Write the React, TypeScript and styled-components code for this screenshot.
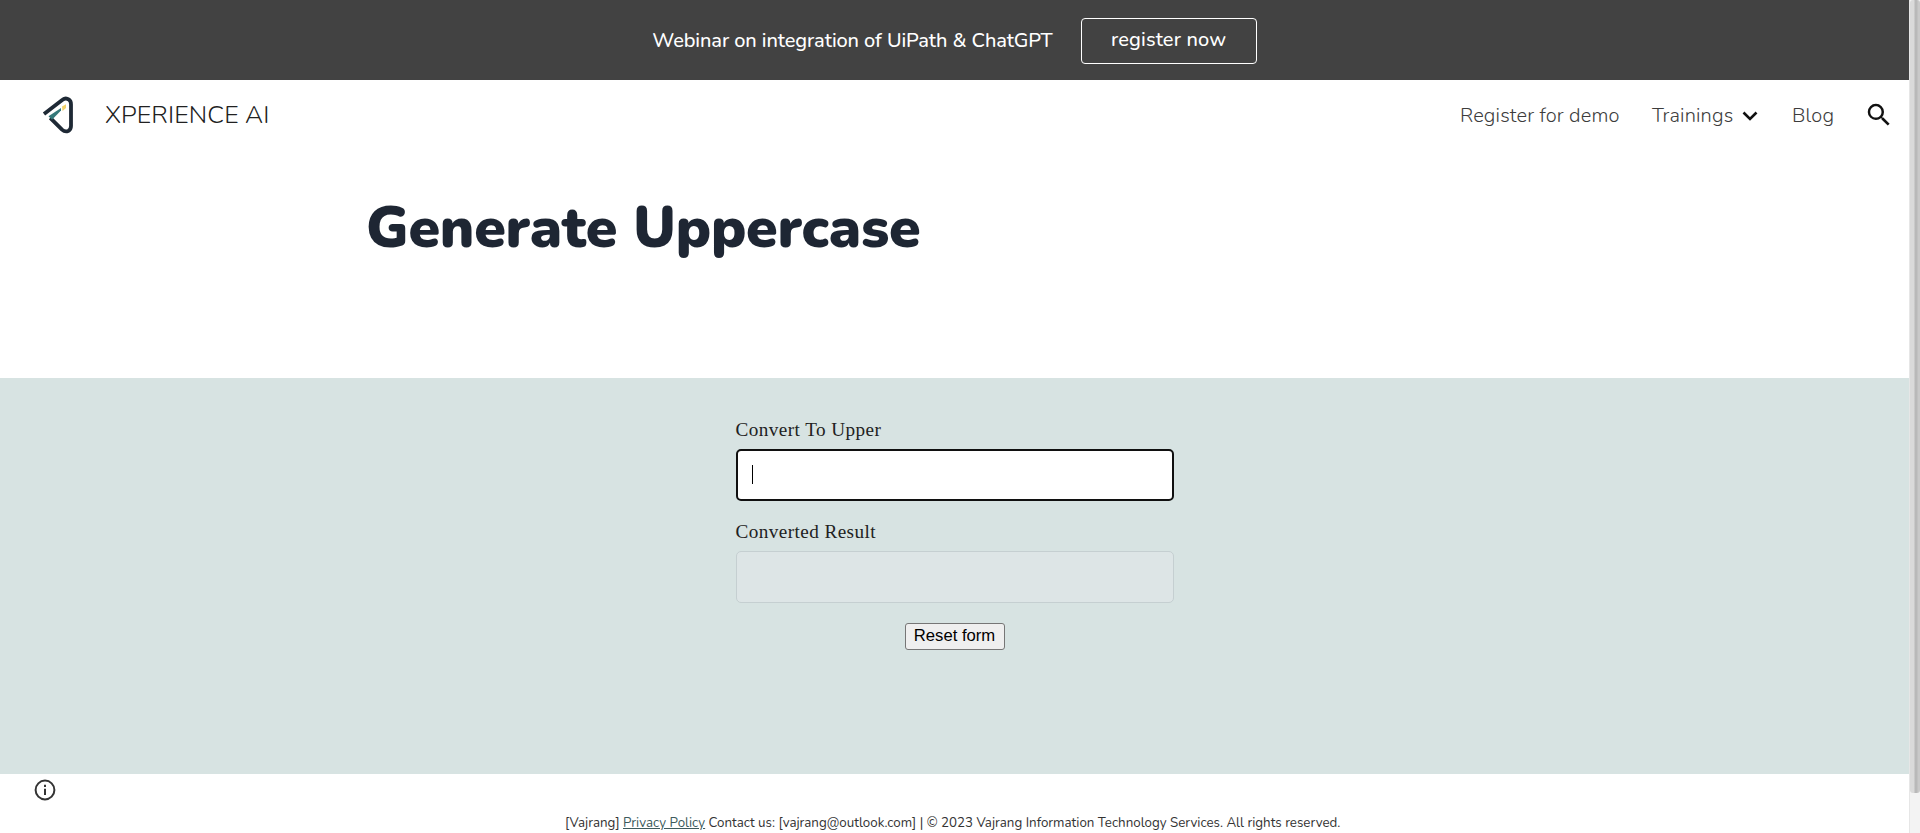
import React from "react";
import styled, { createGlobalStyle } from "styled-components";

const GlobalStyle = createGlobalStyle`
  * { box-sizing: border-box; }
  body {
    margin: 0;
    background: #fff;
    color: #212121;
    font-family: Nunito, "Noto Sans", sans-serif;
    overflow: hidden;
  }
`;

const Window = styled.div`
  display: flex;
  height: 833px;
`;

const Page = styled.div`
  flex: 1;
  min-width: 0;
  display: flex;
  flex-direction: column;
`;

const Announcement = styled.div`
  height: 80px;
  padding-top: 1px;
  display: flex;
  align-items: center;
  justify-content: center;
  gap: 28px;
  background: #424242;
  color: #fff;
`;

const Text = styled.span<{ $size: number; $weight?: number; $spacing?: number }>`
  font-size: ${(p) => p.$size}px;
  font-weight: ${(p) => p.$weight ?? 400};
  letter-spacing: ${(p) => p.$spacing ?? 0}px;
  line-height: 1.4;
  white-space: nowrap;
`;

const RegisterButton = styled.button`
  width: 176px;
  height: 46px;
  padding: 0 0 1px;
  border: 1px solid #fff;
  border-radius: 4px;
  background: transparent;
  color: #fff;
  font-family: inherit;
`;

const Header = styled.header`
  height: 70px;
  display: flex;
  align-items: center;
  padding: 0 15px 0 41px;
`;

const Brand = styled.div`
  display: flex;
  align-items: center;
  gap: 30px;
  margin-right: auto;
`;

const Nav = styled.nav`
  display: flex;
  align-items: center;
  color: #3c3c3c;
`;

const NavItem = styled.a<{ $width: number; $after: number }>`
  display: flex;
  width: ${(p) => p.$width}px;
  margin-right: ${(p) => p.$after}px;
  padding-top: 2px;
`;

const Hero = styled.section`
  height: 228px;
  padding: 37px 0 0 366px;
`;

const Title = styled.h1`
  margin: 0;
  color: #1e2633;
  font-size: 57px;
  font-weight: 900;
  line-height: 82px;
  letter-spacing: -0.2px;
  white-space: nowrap;
`;

const FormSection = styled.section`
  height: 396px;
  padding-top: 37px;
  display: flex;
  justify-content: center;
  background: #d7e3e2;
`;

const Form = styled.form`
  width: 438px;
  display: flex;
  flex-direction: column;
  align-items: stretch;
`;

const Label = styled.label`
  height: 34px;
  padding-top: 3px;
  font-family: "Liberation Serif", serif;
  font-size: 19.2px;
  line-height: 24px;
  letter-spacing: 0.42px;
`;

const Field = styled.div<{ $active?: boolean }>`
  height: 52px;
  margin-bottom: ${(p) => (p.$active ? 16 : 20)}px;
  padding: 0 14px;
  display: flex;
  align-items: center;
  border: ${(p) => (p.$active ? "2px solid #101010" : "1px solid #c5cfd1")};
  border-radius: 5px;
  background: ${(p) => (p.$active ? "#fff" : "#dde5e6")};
`;

const Caret = styled.span`
  width: 1px;
  height: 19px;
  margin-bottom: 2px;
  background: #000;
`;

const ResetButton = styled.button`
  align-self: center;
  width: 100px;
  height: 27px;
  padding: 0 0 1px;
  border: 1px solid #767676;
  border-radius: 3px;
  background: #efefef;
  color: #000;
  font-family: "Liberation Sans", sans-serif;
  font-size: 16.67px;
  white-space: nowrap;
`;

const Footer = styled.footer`
  flex: 1;
  padding: 5px 0 0 34px;
  display: flex;
  align-items: flex-start;
`;

const Legal = styled.p`
  margin: 34px 0 0 509px;
  color: #333;
  font-size: 13.33px;
  line-height: 20px;
  white-space: nowrap;

  a { color: #3d5a5c; }
`;

const ScrollTrack = styled.div`
  width: 11px;
  background: #f3f3f3;
  border-left: 1px solid #e6e6e6;
`;

const ScrollThumb = styled.div`
  height: 793px;
  background: linear-gradient(90deg, #dadada 0 4px, #b9b9b9 5px 7px, #c9c9c9 8px);
  border-radius: 3px;
`;

const Logo = () => (
  <svg width="34" height="40" viewBox="0 0 34 40" fill="none">
    <path d="M3 19 21.5 4.8Q24.6 2.2 28 4.6 30 6 30 9.5V31Q30 34.5 27.2 36 24 37.3 21 34.6L9.2 22.8" stroke="#1e2935" strokeWidth="3.8" />
    <path d="M7.5 21.2 20 13V15.5L11 24.8Z" fill="#347879" />
    <path d="M21 11.5 25 9.2V13L21.5 16Z" fill="#f2d36b" />
  </svg>
);

export default function App() {
  return (
    <>
      <GlobalStyle />
      <Window>
        <Page>
          <Announcement>
            <Text $size={20} $weight={500} $spacing={-0.1}>Webinar on integration of UiPath &amp; ChatGPT</Text>
            <RegisterButton><Text $size={20} $weight={500} $spacing={0.15}>register now</Text></RegisterButton>
          </Announcement>
          <Header>
            <Brand>
              <Logo />
              <Text $size={25} $weight={300} $spacing={0.12}>XPERIENCE AI</Text>
            </Brand>
            <Nav>
              <NavItem $width={160} $after={32}><Text $size={20} $weight={300} $spacing={0.16}>Register for demo</Text></NavItem>
              <NavItem $width={83} $after={7}><Text $size={20} $weight={300} $spacing={0.16}>Trainings</Text></NavItem>
              <NavItem $width={16} $after={34}>
                <svg width="16" height="10" viewBox="0 0 16 10" fill="none" stroke="#111" strokeWidth="2.6"><path d="m1.5 1.5 6.5 6.5 6.5-6.5" /></svg>
              </NavItem>
              <NavItem $width={42} $after={30}><Text $size={20} $weight={300} $spacing={0.16}>Blog</Text></NavItem>
              <svg width="30" height="30" viewBox="0 0 24 24" fill="#111"><path d="M15.5 14h-.79l-.28-.27A6.47 6.47 0 0 0 16 9.5 6.5 6.5 0 1 0 9.5 16c1.61 0 3.09-.59 4.23-1.57l.27.28v.79l5 4.99L20.49 19l-4.99-5zm-6 0C7.01 14 5 11.99 5 9.5S7.01 5 9.5 5 14 7.01 14 9.5 11.99 14 9.5 14z" /></svg>
            </Nav>
          </Header>
          <Hero><Title>Generate Uppercase</Title></Hero>
          <FormSection>
            <Form>
              <Label>Convert To Upper</Label>
              <Field $active><Caret /></Field>
              <Label>Converted Result</Label>
              <Field />
              <ResetButton type="button">Reset form</ResetButton>
            </Form>
          </FormSection>
          <Footer>
            <svg width="22" height="22" viewBox="0 0 22 22" fill="none">
              <circle cx="11" cy="11" r="9.4" stroke="#333" strokeWidth="2" />
              <path d="M11 9.8V16M11 5.8V8" stroke="#333" strokeWidth="2" />
            </svg>
            <Legal>[Vajrang] <a href="#privacy">Privacy Policy</a> Contact us: [vajrang@outlook.com] | © 2023 Vajrang Information Technology Services. All rights reserved.</Legal>
          </Footer>
        </Page>
        <ScrollTrack><ScrollThumb /></ScrollTrack>
      </Window>
    </>
  );
}
